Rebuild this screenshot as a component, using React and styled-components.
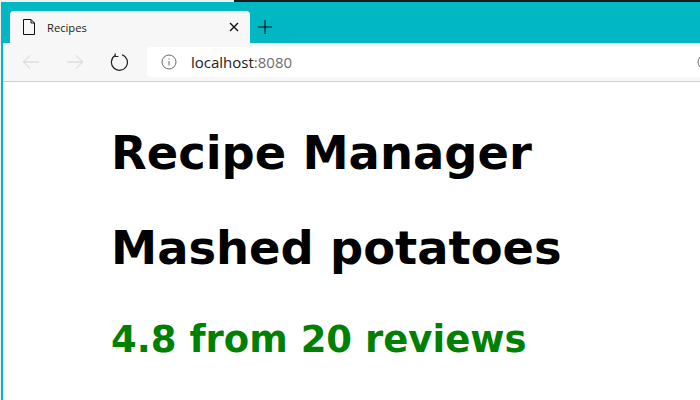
import React from 'react';
import styled, { createGlobalStyle } from 'styled-components';

const Global = createGlobalStyle`
  html, body { margin: 0; padding: 0; background: #fff; overflow: hidden; }
  #root { width: 700px; height: 400px; }
`;

const Desktop = styled.div`
  width: 700px;
  height: 400px;
  overflow: hidden;
  display: flex;
  flex-direction: column;
  background: #f0f0f0;
`;

const TopEdge = styled.div`
  height: 2px;
  flex: none;
  display: flex;
  background: #f0f0f0;
`;

const TopDark = styled.div`
  width: 466px;
  margin-left: auto;
  background: #1a1a1a;
`;

const Win = styled.div`
  flex: 1;
  min-height: 0;
  margin-left: 1px;
  display: flex;
  flex-direction: column;
  border-left: 2px solid #00b7c3;
`;

const TabStrip = styled.div`
  height: 41px;
  flex: none;
  background: #00b7c3;
  display: flex;
  align-items: flex-end;
  padding-left: 7px;
`;

const Tab = styled.div`
  width: 240px;
  height: 32px;
  background: #f7f7f7;
  border-radius: 4px 4px 0 0;
  display: flex;
  align-items: center;
  box-sizing: border-box;
  padding: 0 11px 0 12px;
`;

const TabTitle = styled.span`
  font: 11.2px "Open Sans", "Liberation Sans", sans-serif;
  color: #222;
  margin-left: 11px;
  flex: 1;
`;

const IconSvg = styled.svg`
  display: block;
  flex: none;
  fill: none;
`;

const NewTab = styled.div`
  margin: 0 0 4px 8px;
  height: 24px;
  display: flex;
  align-items: center;
`;

const Toolbar = styled.div`
  height: 39px;
  flex: none;
  box-sizing: border-box;
  background: #f7f7f7;
  border-bottom: 1px solid #d0d0d0;
  display: flex;
  align-items: center;
  padding-left: 19px;
`;

const NavButton = styled.div`
  width: ${p => p.$w}px;
  display: flex;
`;

const AddressBar = styled.div`
  flex: 1;
  height: 30px;
  background: #fff;
  border-radius: 4px 0 0 4px;
  display: flex;
  align-items: center;
  padding-left: 14px;
`;

const UrlHost = styled.span`
  font: 15px "Open Sans", "Liberation Sans", sans-serif;
  color: #222;
  margin-left: 14px;
`;

const UrlPort = styled.span`
  font: 15px "Open Sans", "Liberation Sans", sans-serif;
  color: #6e6e6e;
`;

const Clipped = styled.div`
  margin-left: auto;
  width: 3px;
  overflow: hidden;
`;

const Page = styled.main`
  flex: 1;
  padding: 0 0 0 108px;
  background: #fff;
  font-family: "DejaVu Sans", Verdana, sans-serif;
`;

const Heading = styled.h1`
  margin: ${p => p.$top}px 0 0;
  font-size: 46.4px;
  line-height: 56px;
  font-weight: 700;
  color: #000;
`;

const Rating = styled.h2`
  margin: 43px 0 0;
  font-size: 37px;
  line-height: 42px;
  font-weight: 700;
  color: #008000;
`;

const InfoIcon = ({ size = 16 }) => (
  <IconSvg width={size} height={size} viewBox="0 0 16 16" stroke="#6b6b6b" strokeWidth="1">
    <circle cx="8" cy="8" r="7" />
    <path d="M8 7v4.5M8 4.5v1.2" />
  </IconSvg>
);

export default function App() {
  return (
    <Desktop>
      <Global />
      <TopEdge><TopDark /></TopEdge>
      <Win>
        <TabStrip>
          <Tab>
            <IconSvg width="14" height="18" viewBox="0 0 14 18" stroke="#111" strokeWidth="1">
              <path d="M1.5 1.5h7.5l3.5 3.5v11.5h-11z M9 1.5v3.5h3.5" />
            </IconSvg>
            <TabTitle>Recipes</TabTitle>
            <IconSvg width="10" height="10" viewBox="0 0 10 10" stroke="#111" strokeWidth="1.4">
              <path d="M1 1l8 8M9 1l-8 8" />
            </IconSvg>
          </Tab>
          <NewTab>
            <IconSvg width="14" height="14" viewBox="0 0 14 14" stroke="#111" strokeWidth="1.1">
              <path d="M7 0v14M0 7h14" />
            </IconSvg>
          </NewTab>
        </TabStrip>
        <Toolbar>
          <NavButton $w={44}>
            <IconSvg width="18" height="16" viewBox="0 0 18 16" stroke="#d2d2d2" strokeWidth="1">
              <path d="M17 8H1.5M8 1.5L1.5 8L8 14.5" />
            </IconSvg>
          </NavButton>
          <NavButton $w={44}>
            <IconSvg width="18" height="16" viewBox="0 0 18 16" stroke="#d2d2d2" strokeWidth="1">
              <path d="M1 8h15.5M10 1.5L16.5 8L10 14.5" />
            </IconSvg>
          </NavButton>
          <NavButton $w={37}>
            <IconSvg width="18" height="18" viewBox="0 0 18 18" stroke="#222" strokeWidth="1.2">
              <path d="M5 2.6A8 8 0 1 0 12 1.7M5.2 0.5v3h3.2" />
            </IconSvg>
          </NavButton>
          <AddressBar>
            <InfoIcon />
            <UrlHost>localhost</UrlHost><UrlPort>:8080</UrlPort>
            <Clipped><InfoIcon /></Clipped>
          </AddressBar>
        </Toolbar>
        <Page>
          <Heading $top={43}>Recipe Manager</Heading>
          <Heading $top={39}>Mashed potatoes</Heading>
          <Rating>4.8 from 20 reviews</Rating>
        </Page>
      </Win>
    </Desktop>
  );
}
